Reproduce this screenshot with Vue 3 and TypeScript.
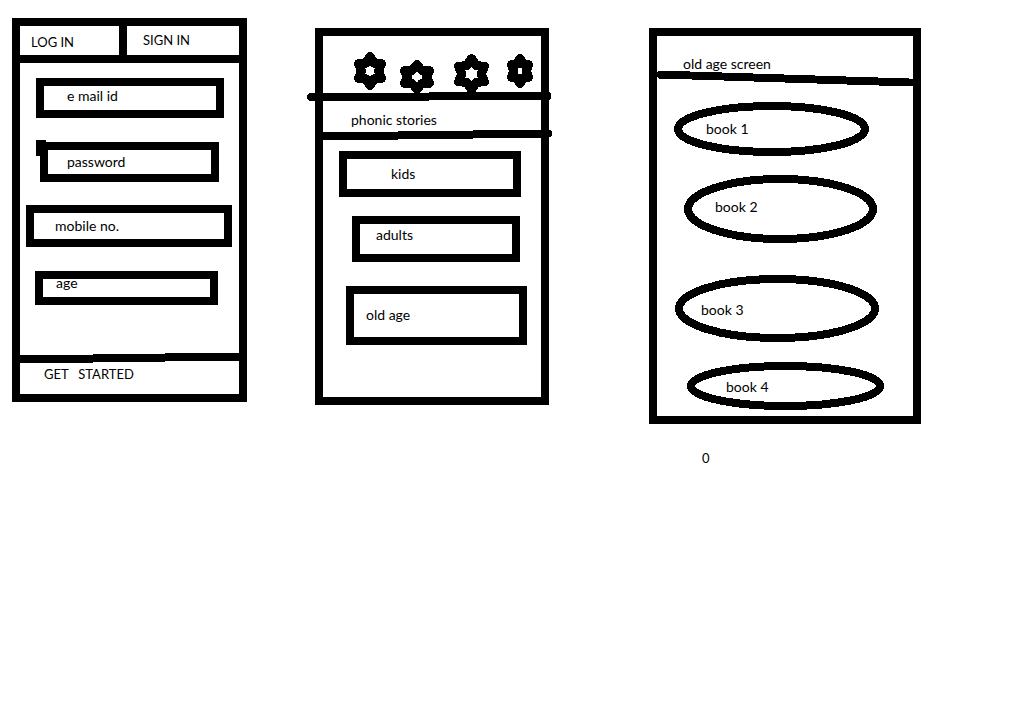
<script setup lang="ts">
import { ref } from 'vue'

interface Field {
  id: string
  label: string
  type: string
}

interface Choice {
  id: string
  label: string
}

interface Star {
  x: number
  y: number
  w: number
  h: number
}

const fields: Field[] = [
  { id: 'email', label: 'e mail id', type: 'text' },
  { id: 'password', label: 'password', type: 'password' },
  { id: 'mobile', label: 'mobile no.', type: 'tel' },
  { id: 'age', label: 'age', type: 'text' },
]
const values = ref<Record<string, string>>({ email: '', password: '', mobile: '', age: '' })

const groups: Choice[] = [
  { id: 'kids', label: 'kids' },
  { id: 'adults', label: 'adults' },
  { id: 'old-age', label: 'old age' },
]

const books: Choice[] = [
  { id: 'book-1', label: 'book 1' },
  { id: 'book-2', label: 'book 2' },
  { id: 'book-3', label: 'book 3' },
  { id: 'book-4', label: 'book 4' },
]

const stars: Star[] = [
  { x: 47, y: 35, w: 11.5, h: 14.5 },
  { x: 94, y: 41, w: 12.5, h: 12.5 },
  { x: 148.5, y: 38, w: 13, h: 15.5 },
  { x: 197, y: 35, w: 8.5, h: 12.5 },
]

// Six-pointed star outline: outer tips alternate with the notches between them.
function starPoints({ x, y, w, h }: Star): string {
  const unit: [number, number][] = [
    [0, -1], [0.36, -0.54], [1, -0.5], [0.74, 0], [1, 0.5], [0.36, 0.54],
    [0, 1], [-0.36, 0.54], [-1, 0.5], [-0.74, 0], [-1, -0.5], [-0.36, -0.54],
  ]
  return unit.map(([ux, uy]) => `${x + ux * w},${y + uy * h}`).join(' ')
}
</script>

<template>
  <main class="board">
    <form class="screen login" @submit.prevent>
      <div class="tabs">
        <button type="button" class="tab log-in">LOG IN</button>
        <button type="button" class="tab sign-in">SIGN IN</button>
      </div>
      <div v-for="field in fields" :key="field.id" class="field" :class="field.id">
        <input
          v-model="values[field.id]"
          class="box"
          :type="field.type"
          :aria-label="field.label"
          :placeholder="field.label"
        />
      </div>
      <svg class="rule start-rule" viewBox="0 0 219 10" preserveAspectRatio="none" aria-hidden="true">
        <path d="M0 2H73V1H145V0H219V8H145V9H73V10H0Z" />
      </svg>
      <button type="submit" class="start">GET&nbsp;&nbsp; STARTED</button>
    </form>

    <section class="screen stories">
      <svg class="stars" viewBox="0 0 218 56" aria-hidden="true">
        <polygon v-for="star in stars" :key="star.x" :points="starPoints(star)" />
      </svg>
      <svg class="rule top-rule" viewBox="0 0 244 9" preserveAspectRatio="none" aria-hidden="true">
        <path d="M3 1H122V0H242L244 2V6L242 8H122V9H3L0 7V3Z" />
      </svg>
      <h2 class="title">phonic stories</h2>
      <svg class="rule title-rule" viewBox="0 0 229 10" preserveAspectRatio="none" aria-hidden="true">
        <path d="M0 2H75V1H150V0H227L229 2V5L227 7L225 8H150V9H75V10H0Z" />
      </svg>
      <button v-for="group in groups" :key="group.id" type="button" class="box group" :class="group.id">
        {{ group.label }}
      </button>
    </section>

    <div class="library">
      <section class="screen books">
        <h2 class="title">old age screen</h2>
        <svg class="rule" viewBox="0 0 256 15" preserveAspectRatio="none" aria-hidden="true">
          <path d="M0 1L2 0H33V1H65V2H96V3H127V4H158V5H189V6H221V7H252V8H256V15H222V14H190V13H160V12H128V11H97V10H67V9H35V8H3L0 6Z" />
        </svg>
        <button v-for="book in books" :key="book.id" type="button" class="book" :class="book.id">
          <svg class="ring" aria-hidden="true"><ellipse class="oval" cx="50%" cy="50%" /></svg>
          {{ book.label }}
        </button>
      </section>
      <p class="count">0</p>
    </div>
  </main>
</template>

<style>
body {
  margin: 0;
  background: #fff;
}
</style>

<style scoped>
.board {
  display: grid;
  grid-template-columns: 235fr 68fr 234fr 100fr 272fr 97fr;
  align-items: start;
  padding: 18px 0 0 12px;
  color: #000;
  font: 14px/18px Lato, "Liberation Sans", sans-serif;
}

.screen {
  display: flex;
  flex-direction: column;
  box-sizing: border-box;
  border: 8px solid #000;
}

button,
input {
  box-sizing: border-box;
  margin: 0;
  border: 0;
  border-radius: 0;
  background: none;
  color: inherit;
  font: inherit;
  text-align: left;
}

button {
  cursor: pointer;
}

input::placeholder {
  color: #000;
  opacity: 1;
}

.login { grid-column: 1; }
.stories { grid-column: 3; margin-top: 10px; padding-bottom: 52px; }
.library { grid-column: 5; margin-top: 10px; }
.books { padding-bottom: 6px; }

.tabs {
  display: grid;
  grid-template-columns: 107fr 112fr;
  border-bottom: 8px solid #000;
}

.tab,
.start,
.count {
  font-size: 13px;
}

.log-in {
  padding: 7px 0 4px 11px;
  border-right: 8px solid #000;
}

.sign-in {
  padding: 5px 0 6px 16px;
}

.box {
  display: block;
  border: 8px solid #000;
}

.field .box {
  width: 100%;
}

.email { margin: 15px 15px 0 16px; }
.email .box { height: 40px; padding: 0 0 6px 23px; }

.password { position: relative; margin: 24px 20px 0; }
.password .box { height: 40px; padding: 2px 0 4px 19px; }
.password::before {
  content: "";
  position: absolute;
  top: -2px;
  left: -4px;
  width: 10px;
  height: 16px;
  background: #000;
}

.mobile { margin: 23px 7px 0 6px; }
.mobile .box { height: 42px; padding: 3px 0 5px 21px; }

.age { margin: 24px 21px 0 15px; }
.age .box { height: 34px; padding: 0 0 12px 13px; }

.rule {
  display: block;
  width: 100%;
  height: 10px;
  fill: #000;
  shape-rendering: crispEdges;
}

.start-rule { margin-top: 48px; }

.start {
  padding: 2px 0 11px 24px;
}

.stars {
  display: block;
  width: 100%;
  height: 56px;
  overflow: visible;
  fill: none;
  stroke: #000;
  stroke-width: 9px;
  stroke-linejoin: round;
  shape-rendering: crispEdges;
}

.top-rule {
  width: calc(100% + 26px);
  height: 9px;
  margin-left: -16px;
}

.title {
  margin: 0;
  font: inherit;
}

.stories .title { padding: 10px 0 1px 28px; }

.title-rule { width: calc(100% + 11px); }

.kids { margin: 11px 20px 0 16px; padding: 6px 0 6px 44px; }
.adults { margin: 19px 21px 0 29px; padding: 2px 0 10px 16px; }
.old-age { margin: 24px 14px 0 23px; padding: 12px 0 13px 12px; }

.books .title { padding: 19px 0 0 26px; }
.books .rule { height: 15px; margin-top: -2px; }

.book { position: relative; }
.book-1 { margin: 16px 44px 0 17px; padding: 18px 0 18px 32px; }
.book-2 { margin: 19px 36px 0 27px; padding: 23px 0 27px 31px; }
.book-3 { margin: 32px 34px 0 18px; padding: 26px 0 23px 26px; }
.book-4 { margin: 20px 29px 0 30px; padding: 16px 0 14px 39px; }

.ring {
  position: absolute;
  inset: 0;
  width: 100%;
  height: 100%;
  overflow: visible;
}

.oval {
  rx: calc(50% - 4px);
  ry: calc(50% - 4px);
  fill: none;
  stroke: #000;
  stroke-width: 8px;
  shape-rendering: crispEdges;
}

.count {
  margin: 25px 0 0 53px;
}
</style>
